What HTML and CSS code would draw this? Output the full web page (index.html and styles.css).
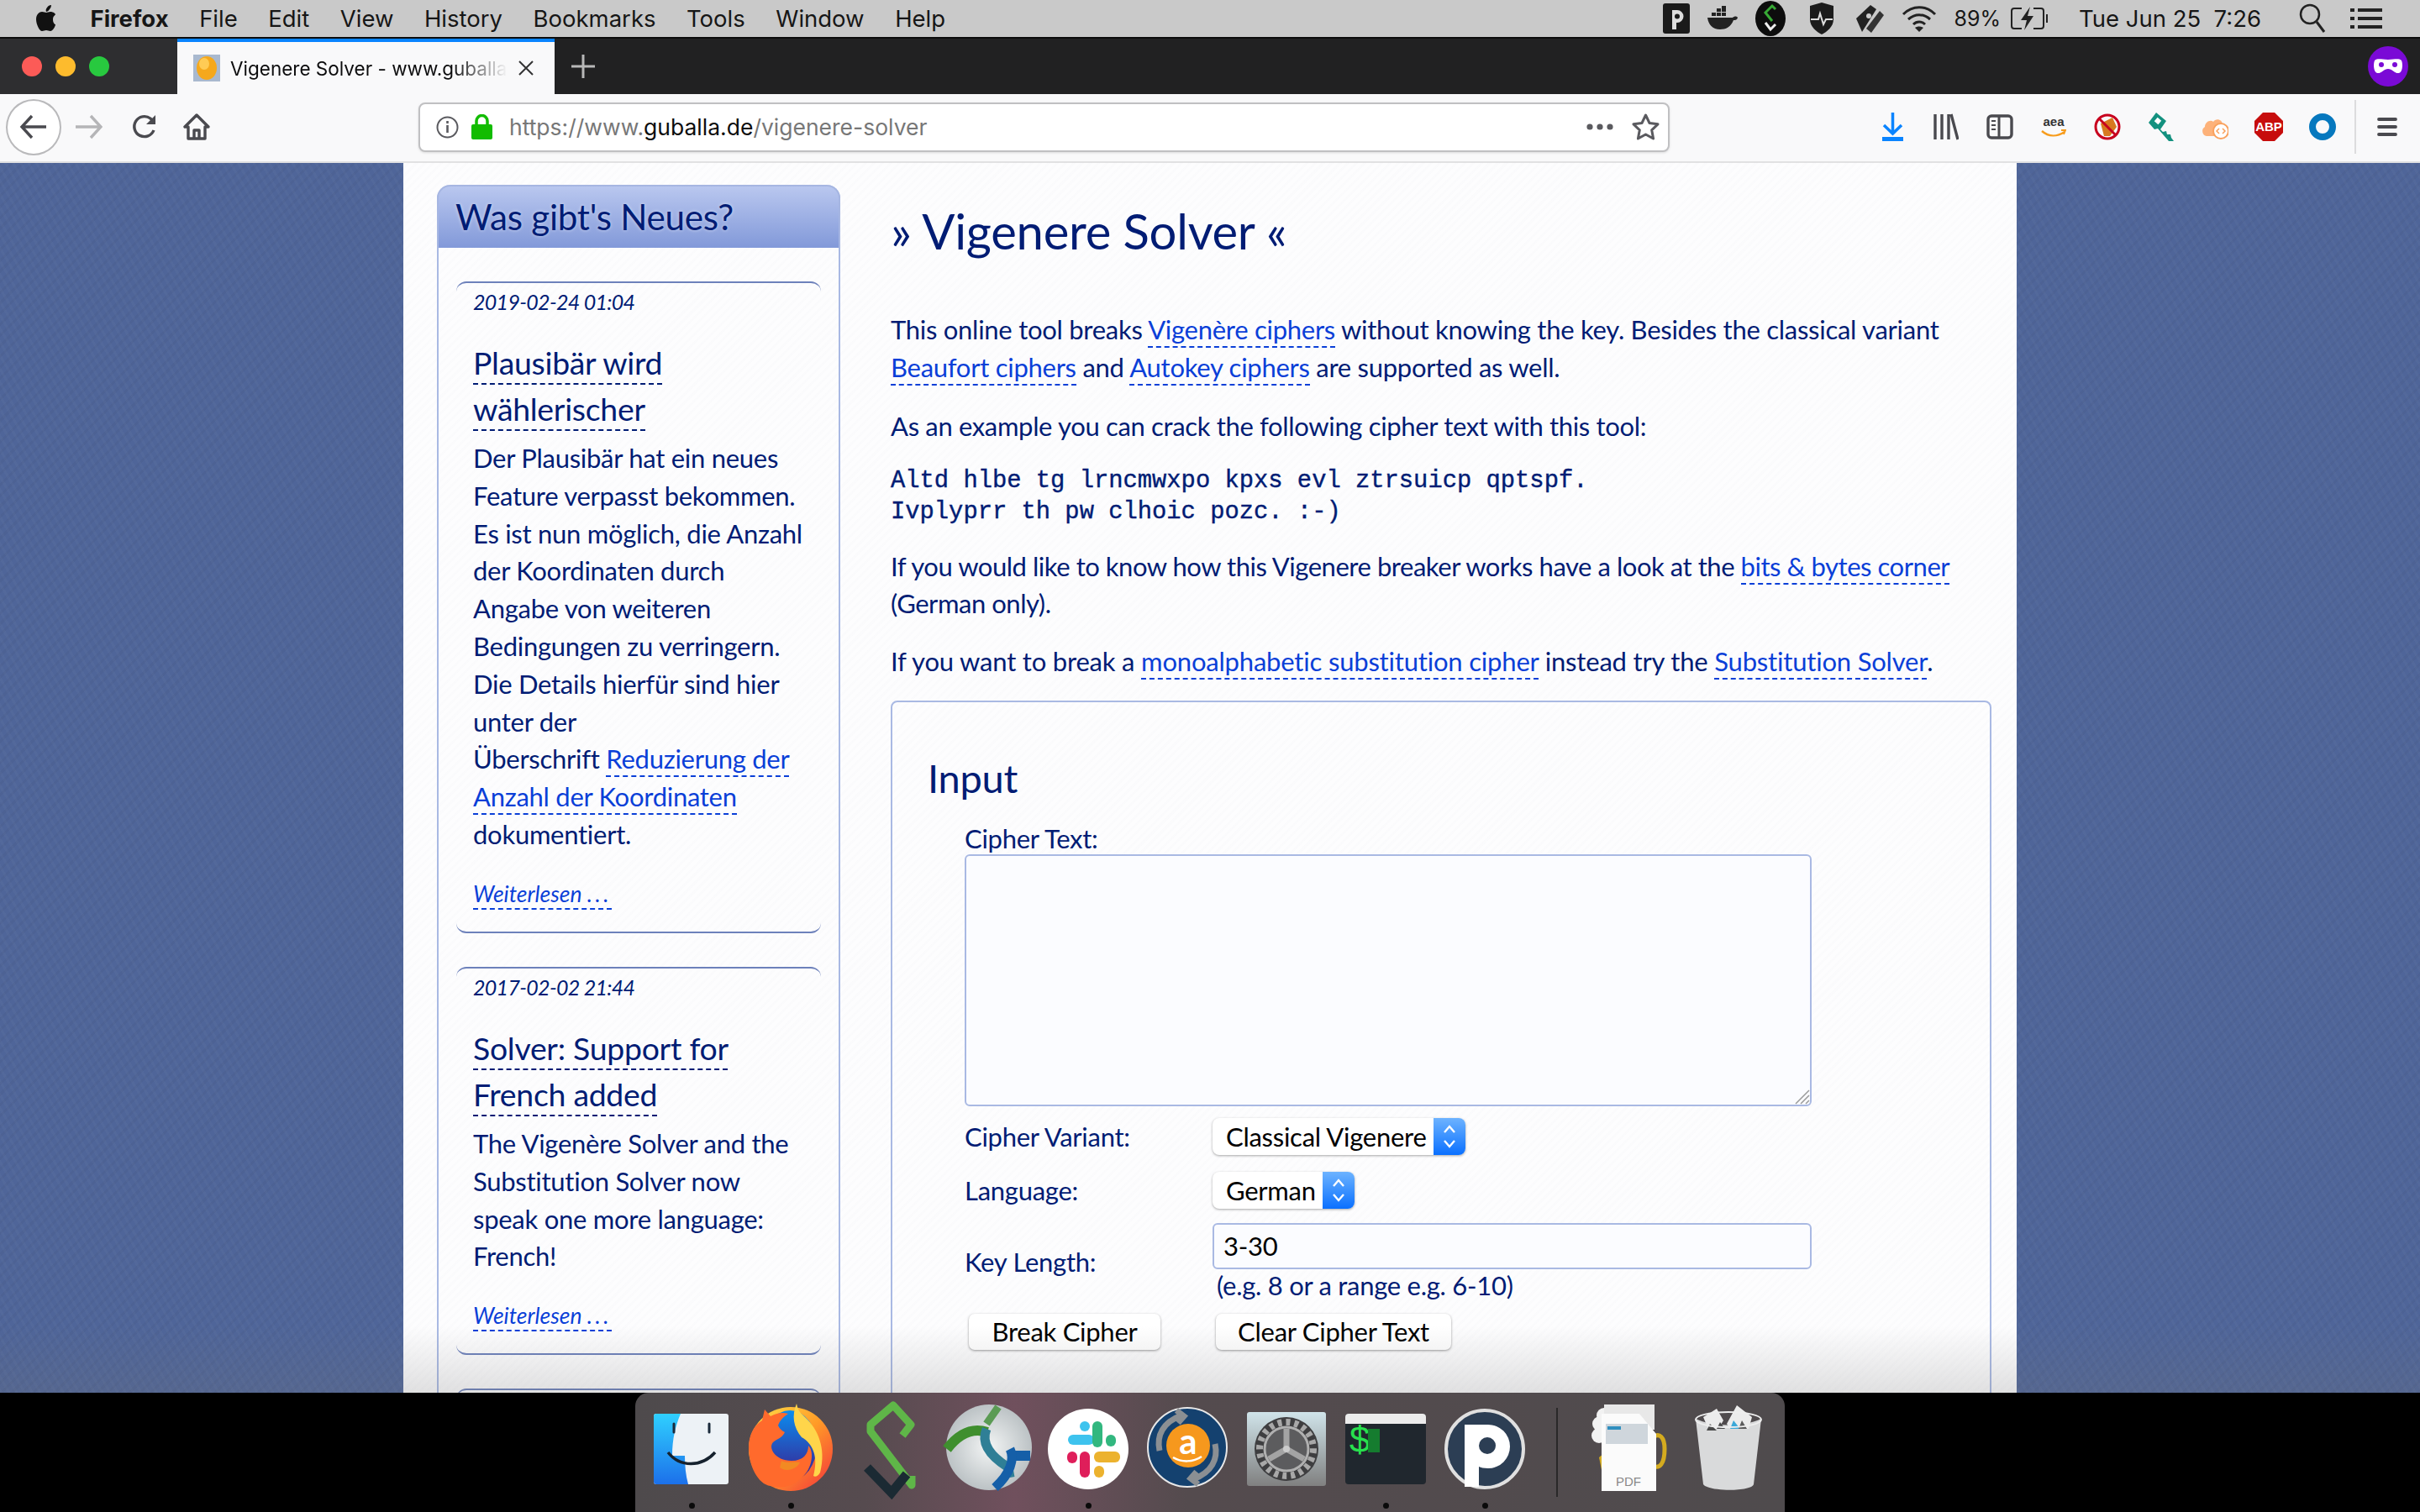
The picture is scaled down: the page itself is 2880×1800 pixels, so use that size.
FILE: index.html
```html
<!DOCTYPE html>
<html lang="en">
<head>
<meta charset="utf-8">
<title>Vigenere Solver</title>
<link rel="stylesheet" href="styles.css">
</head>
<body>
<div class="menubar">
  <svg class="apple" viewBox="0 0 26 32"><path d="M21 17c0-4 3-5 3-6-2-3-5-3-6-3-2 0-4 1-5 1s-3-1-5-1c-3 0-7 3-7 9 0 6 4 14 7 14 2 0 3-1 5-1s3 1 5 1c3 0 6-6 6-8-1 0-3-2-3-6zM17 5c1-1 2-3 2-5-2 0-4 1-5 3-1 1-2 3-1 5 1 0 3-1 4-3z"/></svg>
  <span class="menu-b">Firefox</span><span>File</span><span>Edit</span><span>View</span><span>History</span><span>Bookmarks</span><span>Tools</span><span>Window</span><span>Help</span>
  <div class="status">
    <svg width="32" height="36" viewBox="0 0 32 36"><rect width="32" height="36" rx="3" fill="#1a1a1a"/><path d="M11 8h6a7.500 7.500 0 0 1 0 15h-1v8h-5z" fill="#ddd"/><circle cx="17" cy="15.500" r="3" fill="#1a1a1a"/></svg>
    <svg width="38" height="30" viewBox="0 0 38 30"><path d="M1 14h30c2-2 5-2 6 0-1 3-3 3-5 3-3 8-9 11-16 11C7 28 2 22 1 14z" fill="#222"/><path d="M6 12V8h5v4zm6 0V8h5v4zm6 0V8h5v4zM12 7V3h5v4zm6 0V3h5v4zm0-4V0h5v3z" fill="#222"/></svg>
    <svg width="36" height="42" viewBox="0 0 36 42"><ellipse cx="18" cy="21" rx="18" ry="21" fill="#0d0d0d"/><path d="M24 10l-4-4-8 8 8 10" fill="none" stroke="#37a935" stroke-width="3"/><path d="M12 26l6 8 6-6" fill="none" stroke="#eee" stroke-width="3"/></svg>
    <svg class="st-shield" width="30" height="38" viewBox="0 0 30 38"><path d="M1 4l14-4 14 4v16c0 9-8 15-14 18C9 35 1 29 1 20z" fill="#1b1b1b"/><path d="M2 20h9l2-7 4 13 3-6h8" fill="none" stroke="#ddd" stroke-width="2"/></svg>
    <svg class="st-wallet" width="36" height="36" viewBox="0 0 36 36"><path d="M2 18L19 2l7 5L9 34z" fill="#222"/><path d="M14 30L30 9l5 5-15 21z" fill="#333"/><circle cx="17" cy="15" r="3" fill="#ccc"/></svg>
    <svg width="42" height="32" viewBox="0 0 42 32"><path d="M2 11c11-11 27-11 38 0M8 17c8-7 18-7 26 0M14 23c4-4 10-4 14 0" fill="none" stroke="#222" stroke-width="3"/><path d="M21 32l-5-5c3-2 7-2 10 0z" fill="#222"/></svg>
    <span class="batt-pct">89%</span>
    <svg width="46" height="28" viewBox="0 0 46 28"><path d="M14 2H5Q2 2 2 5v18q0 3 3 3h9M28 2h9q3 0 3 3v18q0 3-3 3h-9" fill="none" stroke="#222" stroke-width="2"/><path d="M43 9h2v10h-2z" fill="#222"/><path d="M24 0L13 16h7l-3 12 11-17h-7z" fill="#222"/></svg>
    <span class="clock">Tue Jun 25&nbsp; 7:26</span>
    <svg class="st-search" width="32" height="36" viewBox="0 0 32 36"><circle cx="13" cy="13" r="11" fill="none" stroke="#222" stroke-width="2.500"/><path d="M21 22l9 12" stroke="#222" stroke-width="3"/></svg>
    <svg width="38" height="24" viewBox="0 0 38 24"><path d="M0 0h5v4H0zm9 0h29v4H9zM0 10h5v4H0zm9 0h29v4H9zM0 20h5v4H0zm9 0h29v4H9z" fill="#222"/></svg>
  </div>
</div>

<div class="tabbar">
  <div class="lights"><i class="red"></i><i class="yellow"></i><i class="green"></i></div>
  <div class="tab">
    <svg width="32" height="32" viewBox="0 0 32 32"><rect width="32" height="32" fill="#a9b9cf"/><ellipse cx="16" cy="16" rx="12" ry="14" fill="#f5a81c"/><ellipse cx="13" cy="11" rx="6" ry="7" fill="#ffcb55"/></svg>
    <span class="tab-title">Vigenere Solver - www.guballa.de</span>
    <svg class="tab-x" width="20" height="20" viewBox="0 0 20 20"><path d="M2 2l16 16M18 2L2 18" stroke="#333" stroke-width="2"/></svg>
  </div>
  <svg class="newtab" width="28" height="28" viewBox="0 0 28 28"><path d="M14 0v28M0 14h28" stroke="#b8b8b8" stroke-width="3"/></svg>
  <svg class="mask" width="48" height="48" viewBox="0 0 48 48"><circle cx="24" cy="24" r="24" fill="#7a0ad6"/><path d="M8 17c4-3 8-1 16-1s12-2 16 1c2 5 1 14-3 15-5 1-8-5-13-5s-8 6-13 5c-4-1-5-10-3-15z" fill="#fff"/><circle cx="16" cy="22" r="3" fill="#7a0ad6"/><circle cx="32" cy="22" r="3" fill="#7a0ad6"/></svg>
</div>

<div class="toolbar">
  <div class="back"><svg width="34" height="30" viewBox="0 0 34 30"><path d="M32 15H3M15 2L3 15l12 13" fill="none" stroke="#4a4a4f" stroke-width="3.400"/></svg></div>
  <svg class="tb-fwd" width="32" height="30" viewBox="0 0 32 30"><path d="M0 15h29M18 2l12 13-12 13" fill="none" stroke="#b5b5b7" stroke-width="3.400"/></svg>
  <svg class="tb-reload" width="31" height="30" viewBox="0 0 31 30"><path d="M27 19a12 12 0 1 1-4-14l5 5" fill="none" stroke="#4a4a4f" stroke-width="3.400"/><path d="M29 1v11H18z" fill="#4a4a4f"/></svg>
  <svg class="tb-home" width="32" height="32" viewBox="0 0 32 32"><path d="M16 2L2 16h4v14h20V16h4zM13 30V20h6v10" fill="none" stroke="#4a4a4f" stroke-width="3.400" stroke-linejoin="round"/></svg>
  <div class="urlbar">
    <svg width="27" height="27" viewBox="0 0 27 27"><circle cx="13.500" cy="13.500" r="12" fill="none" stroke="#5a5a5f" stroke-width="2"/><path d="M13.500 11v9M13.500 6v3" stroke="#5a5a5f" stroke-width="2.600"/></svg>
    <svg width="25" height="30" viewBox="0 0 25 30"><path d="M6 13V8a6.500 6.500 0 0 1 13 0v5" fill="none" stroke="#12bc00" stroke-width="3.500"/><rect y="12" width="25" height="18" rx="2" fill="#12bc00"/></svg>
    <span class="url"><span class="url-dim">https://www.</span>guballa.de<span class="url-dim">/vigenere-solver</span></span>
    <svg class="url-more" width="32" height="8" viewBox="0 0 32 8"><circle cx="4" cy="4" r="3.600" fill="#5a5a5f"/><circle cx="16" cy="4" r="3.600" fill="#5a5a5f"/><circle cx="28" cy="4" r="3.600" fill="#5a5a5f"/></svg>
    <svg width="33" height="32" viewBox="0 0 33 32"><path d="M16.500 2l4.500 9.500 10 1.300-7.300 7 1.900 10.200-9.100-5-9.100 5 1.900-10.200-7.300-7 10-1.300z" fill="none" stroke="#5a5a5f" stroke-width="3" stroke-linejoin="round"/></svg>
  </div>
  <div class="tb-right">
    <svg width="25" height="34" viewBox="0 0 25 34"><path d="M12.500 0v25M2 15l10.500 10L23 15" fill="none" stroke="#0a84ff" stroke-width="3.500"/><rect y="29" width="25" height="5" fill="#0a84ff"/></svg>
    <svg width="30" height="32" viewBox="0 0 30 32"><path d="M2 1v30M10 1v30M18 1v30M21 1l8 30" fill="none" stroke="#4a4a4f" stroke-width="3.400"/></svg>
    <svg width="32" height="30" viewBox="0 0 32 30"><rect x="2" y="2" width="28" height="26" rx="4" fill="none" stroke="#4a4a4f" stroke-width="3.400"/><path d="M15 2v26" stroke="#4a4a4f" stroke-width="3"/><path d="M6 8h5M6 13h5M6 18h5" stroke="#4a4a4f" stroke-width="2"/></svg>
    <svg width="30" height="34" viewBox="0 0 30 34"><text class="aea" x="15" y="16" text-anchor="middle">aea</text><path d="M1 22c8 7 18 7 27 1" fill="none" stroke="#f79c1c" stroke-width="2.400"/><path d="M24 21l5 0-2 5" fill="none" stroke="#f79c1c" stroke-width="1.800"/></svg>
    <svg width="32" height="32" viewBox="0 0 32 32"><path d="M8 12l14-7 5 11-8 11H12z" fill="#d7791f"/><circle cx="16" cy="16" r="14" fill="none" stroke="#c8001e" stroke-width="3"/><path d="M6 6l20 20" stroke="#c8001e" stroke-width="3"/></svg>
    <svg width="32" height="34" viewBox="0 0 32 34"><path d="M1 12L10 0l12 10-7 10 3 3 4-1 1 4 4 0 1 4 3 4h-6L12 19l-4 1z" fill="#13917f"/><rect x="9" y="7" width="6" height="6" fill="#fff" transform="rotate(40 12 10)"/></svg>
    <svg width="32" height="30" viewBox="0 0 32 30"><path d="M6 26a6 6 0 0 1-2-11c0-6 7-9 10-6 3-5 11-3 11 3 5 2 5 11 1 14z" fill="#fdb27a"/><circle cx="23" cy="20" r="9" fill="#fff" stroke="#f9a15d" stroke-width="2"/><path d="M21 17l-3 3 3 3M25 17l3 3-3 3" fill="none" stroke="#f9a15d" stroke-width="1.500"/></svg>
    <svg width="34" height="34" viewBox="0 0 34 34"><path d="M10 0h14l10 10v14L24 34H10L0 24V10z" fill="#c70d0c"/><text class="abp" x="17" y="22" text-anchor="middle">ABP</text></svg>
    <svg width="32" height="32" viewBox="0 0 32 32"><circle cx="16" cy="16" r="12" fill="none" stroke="#0678be" stroke-width="8"/></svg>
    <i class="tb-sep"></i>
    <svg width="24" height="24" viewBox="0 0 24 24"><path d="M2 3h20M2 12h20M2 21h20" stroke="#4a4a4f" stroke-width="3.800" stroke-linecap="round"/></svg>
  </div>
</div>

<div class="viewport">
  <div class="site">
    <aside class="sidebar">
      <h2 class="side-head">Was gibt's Neues?</h2>
      <article class="news">
        <p class="date">2019-02-24 01:04</p>
        <h3 class="news-title"><a>Plausibär wird</a> <a>wählerischer</a></h3>
        <p class="news-body">Der Plausibär hat ein neues Feature verpasst bekommen. Es ist nun möglich, die Anzahl der Koordinaten durch Angabe von weiteren Bedingungen zu verringern. Die Details hierfür sind hier unter der<br>Überschrift <a class="link">Reduzierung der Anzahl der Koordinaten</a> dokumentiert.</p>
        <p class="more"><a class="link">Weiterlesen <span class="dots">...</span></a></p>
      </article>
      <article class="news">
        <p class="date">2017-02-02 21:44</p>
        <h3 class="news-title"><a>Solver: Support for</a> <a>French added</a></h3>
        <p class="news-body">The Vigenère Solver and the Substitution Solver now speak one more language: French!</p>
        <p class="more"><a class="link">Weiterlesen <span class="dots">...</span></a></p>
      </article>
      <article class="news"></article>
    </aside>
    <main class="content">
      <h1 class="title">» Vigenere Solver «</h1>
      <p class="lead">This online tool breaks <a class="link">Vigenère ciphers</a> without knowing the key. Besides the classical variant<br><a class="link">Beaufort ciphers</a> and <a class="link">Autokey ciphers</a> are supported as well.</p>
      <p class="tight-a">As an example you can crack the following cipher text with this tool:</p>
      <pre class="cipher">Altd hlbe tg lrncmwxpo kpxs evl ztrsuicp qptspf.
Ivplyprr th pw clhoic pozc. :-)</pre>
      <p class="tight-b">If you would like to know how this Vigenere breaker works have a look at the <a class="link">bits &amp; bytes corner</a><br>(German only).</p>
      <p class="loose">If you want to break a <a class="link">monoalphabetic substitution cipher</a> instead try the <a class="link">Substitution Solver</a>.</p>
      <section class="panel">
        <h2 class="panel-title">Input</h2>
        <div class="form">
          <label class="ct-label">Cipher Text:</label>
          <div class="textarea"><svg class="grip" width="18" height="18" viewBox="0 0 18 18"><path d="M1 17L17 1M7 17L17 7M13 17l4-4" stroke="#999" stroke-width="1.500"/></svg></div>
          <div class="row"><label>Cipher Variant:</label><div class="select"><span>Classical Vigenere</span><b class="arrows"><svg width="16" height="32" viewBox="0 0 16 32"><path d="M2 11l6-7 6 7M2 21l6 7 6-7" fill="none" stroke="#fff" stroke-width="2.400"/></svg></b></div></div>
          <div class="row"><label>Language:</label><div class="select"><span>German</span><b class="arrows"><svg width="16" height="32" viewBox="0 0 16 32"><path d="M2 11l6-7 6 7M2 21l6 7 6-7" fill="none" stroke="#fff" stroke-width="2.400"/></svg></b></div></div>
          <div class="row row-key"><label>Key Length:</label><div class="key"><div class="input">3-30</div><div class="hint">(e.g. 8 or a range e.g. 6-10)</div></div></div>
          <div class="buttons"><button class="btn btn-a">Break Cipher</button><button class="btn btn-b">Clear Cipher Text</button></div>
        </div>
      </section>
    </main>
  </div>
  <div class="dock-shade"></div>
</div>

<footer class="desktop">
  <div class="dock">
    <div class="slot"><svg width="118" height="120" viewBox="0 0 118 120"><defs><linearGradient id="fa" x1="0" y1="0" x2="0" y2="1"><stop offset="0" stop-color="#2fd0ff"/><stop offset="1" stop-color="#1c70ea"/></linearGradient></defs><rect x="14" y="18" width="89" height="84" rx="3" fill="#edf2f6"/><path d="M17 18h29c-6 14-10 30-10 50h15c0 12 1 23 4 34H17q-3 0-3-3V21q0-3 3-3z" fill="url(#fa)"/><path d="M38 30v10M80 30v10" stroke="#1a2a3a" stroke-width="3" stroke-linecap="round"/><path d="M31 64c14 18 40 18 56 0" fill="none" stroke="#16222e" stroke-width="3.500"/></svg><i class="dot"></i></div>
    <div class="slot"><svg width="118" height="120" viewBox="0 0 118 120"><defs><linearGradient id="fb" x1="0" y1="0" x2="1" y2="1"><stop offset="0" stop-color="#ffe14b"/><stop offset=".5" stop-color="#ff9b27"/><stop offset="1" stop-color="#f4323c"/></linearGradient><linearGradient id="fc" x1="0" y1="0" x2="0" y2="1"><stop offset="0" stop-color="#0a8df0"/><stop offset="1" stop-color="#3d1e8d"/></linearGradient></defs><ellipse cx="59" cy="60" rx="50" ry="50" fill="url(#fb)"/><ellipse cx="58" cy="56" rx="32" ry="42" fill="url(#fc)"/><path d="M9 58c0-14 6-26 16-32l3-13 7 8c8-4 14-5 21-3-6 4-10 8-12 14 2 4 4 6 8 8-4 8-10 8-14 12-6 6 2 22 22 22 14 0 20-8 20-18 8 8 4 30-10 40-8 8-22 12-35 8C20 102 9 80 9 58z" fill="#ff6a2c"/><path d="M66 6c2 10 4 10 12 18 12 12 24 34 16 64-2 4-6 6-8 4 6-22 0-38-14-46C62 34 60 20 66 6z" fill="#ffd54a"/><path d="M48 74c8 4 14 0 22 2-4 8-16 12-24 6z" fill="#f28a23"/></svg><i class="dot"></i></div>
    <div class="slot"><svg width="118" height="120" viewBox="0 0 118 120"><path d="M74 44l10-13-21-23L36 31v8l49 64V92" fill="none" stroke="#5fb648" stroke-width="9" stroke-linejoin="round"/><path d="M32 82l29 30 18-22" fill="none" stroke="#1b2a33" stroke-width="11"/></svg><i class="dot none"></i></div>
    <div class="slot"><svg width="118" height="120" viewBox="0 0 118 120"><defs><radialGradient id="ca" cx=".5" cy=".5" r=".55"><stop offset="0" stop-color="#f3f5f5"/><stop offset="1" stop-color="#b6bdc0"/></radialGradient></defs><circle cx="59" cy="58" r="51" fill="url(#ca)"/><path d="M9 60c14-18 30-26 48-20" fill="none" stroke="#3f8f2e" stroke-width="12"/><path d="M56 36c-8 20 10 36 26 46l2 12" fill="none" stroke="#2f7f96" stroke-width="11"/><path d="M70 10L56 30" stroke="#5b9b54" stroke-width="9"/><path d="M84 62h24v12H84z" fill="#155fa8"/><path d="M84 60c6 12 0 30-18 46" fill="none" stroke="#155fa8" stroke-width="11"/></svg><i class="dot none"></i></div>
    <div class="slot"><svg width="118" height="120" viewBox="0 0 118 120"><circle cx="59" cy="60" r="48" fill="#fff"/><rect x="35" y="43" width="31" height="12" rx="6" fill="#3ec3ee"/><rect x="49" y="27" width="12" height="12" rx="6" fill="#3ec3ee"/><rect x="64" y="27" width="12" height="31" rx="6" fill="#32b77f"/><rect x="80" y="43" width="12" height="14" rx="6" fill="#32b77f"/><rect x="66" y="63" width="31" height="13" rx="6" fill="#ecb22e"/><rect x="66" y="80" width="12" height="14" rx="6" fill="#ecb22e"/><rect x="49" y="63" width="12" height="31" rx="6" fill="#df1e5a"/><rect x="34" y="63" width="12" height="14" rx="6" fill="#df1e5a"/></svg><i class="dot"></i></div>
    <div class="slot"><svg width="118" height="120" viewBox="0 0 118 120"><circle cx="59" cy="58" r="47" fill="#14416f" stroke="#e8e8e8" stroke-width="2"/><path d="M26 62c-4-18 4-34 26-42M46 14l9 7-7 8" fill="none" stroke="#8b8f93" stroke-width="7"/><path d="M92 54c4 18-4 34-26 42M72 102l-9-7 7-8" fill="none" stroke="#8b8f93" stroke-width="7"/><circle cx="60" cy="56" r="26" fill="#f6981d"/><text class="az" x="60" y="66" text-anchor="middle">a</text><path d="M42 70c10 6 24 6 34-1" fill="none" stroke="#fff" stroke-width="2.500"/></svg><i class="dot none"></i></div>
    <div class="slot"><svg width="118" height="120" viewBox="0 0 118 120"><defs><linearGradient id="sp" x1="0" y1="0" x2="0" y2="1"><stop offset="0" stop-color="#d0e4ea"/><stop offset="1" stop-color="#808080"/></linearGradient></defs><rect x="12" y="16" width="94" height="88" rx="3" fill="url(#sp)"/><circle cx="59" cy="60" r="38" fill="#3e3e40"/><circle cx="59" cy="60" r="32" fill="none" stroke="#a8a8a8" stroke-width="8" stroke-dasharray="5 5"/><circle cx="59" cy="60" r="26" fill="#5c5c5e" stroke="#b0b0b0" stroke-width="3"/><path d="M59 60V36M59 60L38 72M59 60l21 12" stroke="#a4a4a4" stroke-width="7"/><circle cx="59" cy="60" r="4" fill="#ccc"/></svg><i class="dot none"></i></div>
    <div class="slot"><svg width="118" height="120" viewBox="0 0 118 120"><rect x="11" y="18" width="96" height="84" rx="4" fill="#20272e"/><path d="M11 30v-8q0-4 4-4h88q4 0 4 4v8z" fill="#ececec"/><text class="dollar" x="15" y="63">$</text><rect x="38" y="36" width="14" height="28" fill="#157c2f"/></svg><i class="dot"></i></div>
    <div class="slot"><svg width="118" height="120" viewBox="0 0 118 120"><circle cx="59" cy="60" r="46" fill="#2c3e54" stroke="#e0e0e0" stroke-width="4"/><path d="M35 105V31h28a24 24 0 0 1 0 52c-5 0-9-1-11-2v24z" fill="#fff"/><circle cx="62" cy="56" r="10" fill="#2c3e54"/></svg><i class="dot"></i></div>
    <div class="dock-sep"></div>
    <div class="slot"><svg width="118" height="120" viewBox="0 0 118 120"><path d="M88 46c8-6 14 0 14 14 0 18-6 24-14 20" fill="none" stroke="#d4ab1f" stroke-width="5"/><path d="M24 70l4 20h20V50z" fill="#d4ab1f"/><circle cx="25" cy="30" r="9" fill="#f2f2f2"/><circle cx="24" cy="44" r="9" fill="#f2f2f2"/><circle cx="30" cy="20" r="9" fill="#f2f2f2"/><rect x="30" y="7" width="60" height="30" fill="#e8e8e8"/><path d="M27 18h45l20 24v68H27z" fill="#fbfbfb"/><rect x="32" y="30" width="50" height="24" fill="#cfd6dc"/><rect x="34" y="33" width="16" height="4" fill="#2f8fbf"/><text class="pdf" x="59" y="104" text-anchor="middle">PDF</text></svg><i class="dot none"></i></div>
    <div class="slot"><svg width="118" height="120" viewBox="0 0 118 120"><path d="M21 24c20 10 58 10 78 0l-9 78c-2 9-54 9-60 0z" fill="#d9dadb"/><path d="M30 22l16-10 8 14-6 10H36zM58 30l12-22 18 14-4 14H62z" fill="#ececec"/><path d="M38 30l8 8H34zM50 28l6 8h-10z" fill="#4a4a4a"/><path d="M66 26l8 10H62z" fill="#3aa8d8"/><path d="M76 26l6 10H72z" fill="#5b5b5b"/><ellipse cx="60" cy="25" rx="39" ry="9" fill="none" stroke="#eee" stroke-width="2"/></svg><i class="dot none"></i></div>
  </div>
</footer>
</body>
</html>
```
FILE: styles.css
```css
* { box-sizing: border-box; }
html, body { margin: 0; height: 100%; overflow: hidden; }
body { width: 2880px; height: 1800px; display: flex; flex-direction: column; background: #000; font-family: "Lato", "Noto Sans", sans-serif; }

.menubar { height: 46px; flex: none; display: flex; align-items: center; padding: 0 45px 0 42px; gap: 36.500px; background: #c9c9c9; border-bottom: 2px solid #0c0c0c; font-family: Inter, "Liberation Sans", sans-serif; font-size: 27.500px; color: #161616; }
.apple { width: 26px; height: 32px; margin-right: 3px; fill: #111; }
.menu-b { font-weight: 700; }
.status { margin-left: auto; display: flex; align-items: center; gap: 20px; }
.st-shield { margin-left: 8px; }
.st-wallet { margin-left: 4px; }
.st-search { margin-right: 9px; }
.batt-pct { margin-right: -9px; font-size: 25px; }
.clock { font-size: 27.500px; margin: 0 25px 0 16px; }

.tabbar { height: 66px; flex: none; display: flex; align-items: stretch; background: #212122; }
.lights { width: 211px; display: flex; align-items: center; gap: 16px; padding: 0 0 0 26px; background: #2e2e30; }
.lights i { width: 24px; height: 24px; border-radius: 50%; }
.lights .red { background: #fc5b57; }
.lights .yellow { background: #fdbb2d; }
.lights .green { background: #28c93f; }
.tab { width: 449px; display: flex; align-items: center; gap: 12px; padding: 0 24px 0 19px; background: #f9f9fa; border-top: 4px solid #0a84ff; }
.tab-title { flex: 1; overflow: hidden; white-space: nowrap; font-family: Inter, "Liberation Sans", sans-serif; font-size: 22.500px; color: #0c0c0d; -webkit-mask-image: linear-gradient(90deg, #000 80%, transparent); mask-image: linear-gradient(90deg, #000 80%, transparent); }
.newtab { align-self: center; margin-left: 20px; }
.mask { align-self: center; margin: 0 14px 0 auto; }

.toolbar { height: 82px; flex: none; display: flex; align-items: center; padding: 0 0 2px 7px; background: #f9f9fa; border-bottom: 2px solid #e1e1e2; }
.back { width: 66px; height: 67px; flex: none; display: flex; align-items: center; justify-content: center; border-radius: 50%; background: #fff; border: 2px solid #b9b9bb; }
.tb-fwd { margin-left: 17px; }
.tb-reload { margin-left: 34px; }
.tb-home { margin-left: 31px; }
.urlbar { width: 1489px; height: 59px; margin-left: 248px; display: flex; align-items: center; gap: 15px; padding: 0 10px 0 19px; background: #fff; border: 2px solid #c0c0c2; border-radius: 8px; box-shadow: 0 1px 3px rgba(0,0,0,.12); }
.url { flex: 1; margin-left: 5px; font-family: Inter, "Liberation Sans", sans-serif; font-size: 26.500px; color: #0c0c0d; white-space: nowrap; }
.url-dim { color: #777; }
.url-more { margin-right: 7px; }
.tb-right { margin-left: 233px; display: grid; grid-template-columns: repeat(9, 64px) 14px 62px; align-items: center; justify-items: center; }
.tb-sep { width: 2px; height: 64px; background: #dcdcdd; }
.aea { font: 700 15px "Liberation Sans", sans-serif; fill: #333; }
.abp { font: 700 15px "Liberation Sans", sans-serif; fill: #fff; }

.viewport { flex: 1; min-height: 0; position: relative; overflow: hidden; background-color: #4f6599; background-image: repeating-linear-gradient(60deg, rgba(255,255,255,.025) 0 3px, transparent 3px 8px), repeating-linear-gradient(-45deg, rgba(0,0,0,.03) 0 3px, transparent 3px 9px); }
.site { width: 1920px; height: 100%; margin: 0 auto; display: flex; align-items: flex-start; gap: 60px; padding: 26px 30px 0 40px; background-color: #fdfdfe; background-image: repeating-linear-gradient(-45deg, rgba(60,70,110,.012) 0 3px, transparent 3px 7px); color: #001c74; font-size: 31px; line-height: 44.600px; letter-spacing: -.27px; }
.dock-shade { position: absolute; left: 0; right: 0; bottom: 0; height: 80px; background: linear-gradient(rgba(120,120,120,0), rgba(110,110,110,.2)); }

.sidebar { width: 480px; flex: none; border: 2px solid #a9b9e3; border-top: 0; border-radius: 16px 16px 0 0; }
.side-head { margin: 0 -2px; height: 75px; padding: 0 20px; border: 2px solid #a6b6e2; border-bottom: 0; border-radius: 16px 16px 0 0; background: linear-gradient(#b9c7ef, #8299d9); font-size: 42.200px; font-weight: 400; line-height: 72px; color: #001c74; text-shadow: 0 0 4px rgba(255,255,255,.55); }
.news { margin: 40px 21px 0; padding: 0 14px 0 20px; border-top: 2px solid #6d81bb; border-bottom: 2px solid #6d81bb; border-radius: 12px; height: 776px; }
.news:nth-child(3) { height: 462px; }
.news:nth-child(4) { height: 100px; }
.date { margin: 6px 0 0; font-size: 25px; font-style: italic; line-height: 32px; letter-spacing: -.7px; }
.news-title { margin: 29px 0 0; font-size: 37.400px; font-weight: 400; line-height: 55px; }
.news-title a { border-bottom: 2px dashed #001c74; padding-bottom: 2px; }
.news-body { margin: 9px 0 0; line-height: 44.800px; }
.more { margin: 31px 0 0; font-size: 26.500px; font-style: italic; line-height: 34px; letter-spacing: 0; }
.dots { letter-spacing: 3.500px; }
.link { color: #0a3fd8; border-bottom: 2px dashed #0a3fd8; padding-bottom: 1px; }

.content { flex: 1; min-width: 0; }
.content p { margin: 0 0 24px; }
.content p.lead { margin-bottom: 26px; }
.content p.tight-a { letter-spacing: -.34px; }
.content p.tight-b { letter-spacing: -.46px; }
.content p.loose { letter-spacing: -.19px; }
.title { margin: 19px 0 0; height: 131px; font-size: 58px; font-weight: 400; line-height: 72px; color: #001c74; }
.cipher { margin: 0 0 24px; font-family: "Liberation Mono", monospace; font-size: 28.800px; line-height: 37px; letter-spacing: 0; color: #001c74; -webkit-text-stroke: .4px #001c74; }
.panel { height: 900px; margin-top: 1px; padding: 60px 0 0 42px; border: 2px solid #a9b9e3; border-radius: 8px; }
.panel-title { margin: 0; font-size: 47px; font-weight: 400; line-height: 60px; }
.form { margin-left: 44px; width: 1008px; }
.ct-label { display: block; margin-top: 23px; line-height: 38px; }
.textarea { position: relative; height: 300px; background: #fbfcff; border: 2px solid #a9b9e3; border-radius: 6px; }
.grip { position: absolute; right: 0; bottom: 0; }
.row { display: flex; align-items: center; margin-top: 14px; }
.row label { width: 295px; flex: none; }
.row + .row { margin-top: 20px; }
.row + .row-key { margin-top: 16px; }
.select { display: inline-flex; align-items: stretch; height: 44px; background: #fff; border-radius: 8px; box-shadow: 0 1px 3px rgba(0,0,0,.35); color: #000; line-height: 44px; }
.select span { padding: 0 8px 0 16px; }
.arrows { width: 38px; display: flex; align-items: center; justify-content: center; border-radius: 0 8px 8px 0; background: linear-gradient(#6db3ff, #0a70ff); }
.row-key label { padding-bottom: 3px; }
.key { flex: 1; }
.input { height: 55px; padding: 0 11px; background: #fbfcff; border: 2px solid #a9b9e3; border-radius: 6px; color: #000; line-height: 50px; }
.hint { margin-top: -3px; padding-left: 5px; line-height: 44px; }
.buttons { display: flex; margin: 12px 0 0 5px; }
.btn { height: 43px; padding: 0; background: #fff; border: 0; border-radius: 7px; box-shadow: 0 1px 3px rgba(0,0,0,.4); font: inherit; letter-spacing: inherit; line-height: 43px; color: #000; }
.btn-a { width: 228px; }
.btn-b { width: 280px; margin-left: 66px; }

.desktop { height: 142px; flex: none; display: flex; justify-content: center; background: #000; }
.dock { width: 1368px; display: flex; padding: 7px 0 0 8px; border-radius: 16px 16px 0 0; background: linear-gradient(90deg, #4e4a4c 0, #564b4f 20%, #70505d 33%, #544b4e 48%, #4f4b4d 100%); }
.slot { width: 118px; display: flex; flex-direction: column; align-items: center; }
.slot svg { display: block; flex: none; }
.dot { width: 7px; height: 7px; margin-top: 4px; border-radius: 50%; background: #0a0a0a; }
.dot.none { background: none; }
.dock-sep { width: 53px; height: 106px; margin-top: 11px; background: linear-gradient(#2a2829, #2a2829) 26px 0 / 2px 100% no-repeat; }
.az { font: 700 42px Lato, sans-serif; fill: #fff; }
.dollar { font: 400 44px "Liberation Mono", monospace; fill: #28e04e; }
.pdf { font: 400 15px "Liberation Sans", sans-serif; fill: #888; }
```
